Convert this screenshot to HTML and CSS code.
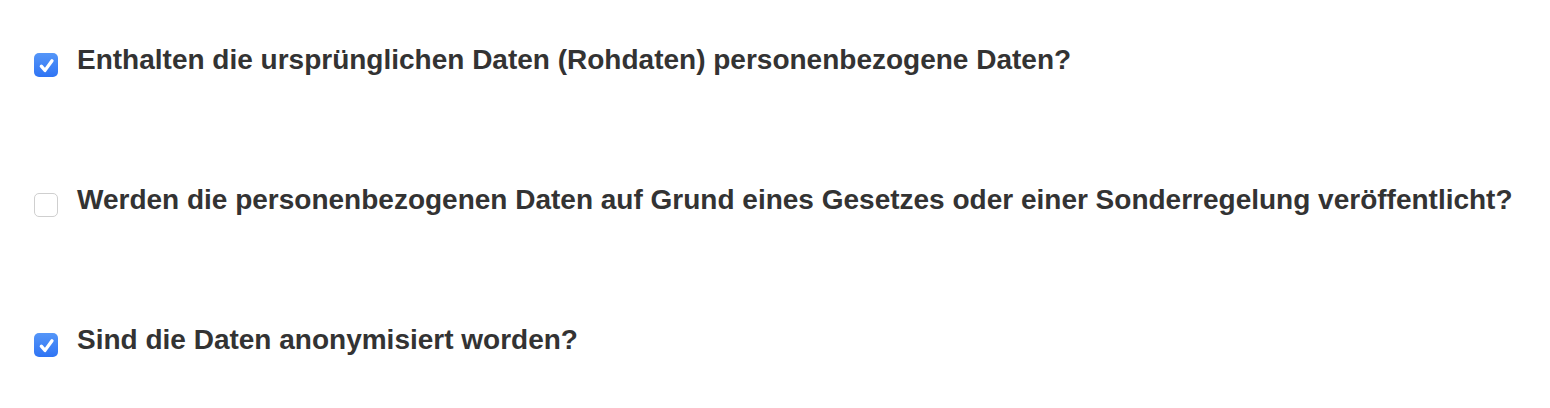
FILE: index.html
```html
<!DOCTYPE html>
<html lang="de">
<head>
<meta charset="utf-8">
<link rel="stylesheet" href="styles.css">
</head>
<body>
<div class="list">
  <label class="item"><span class="box checked"><svg viewBox="0 0 24 24" width="24" height="24"><path d="M7.3 13.2 L11 17.4 L18 7.8" fill="none" stroke="#fff" stroke-width="3.3" stroke-linecap="round" stroke-linejoin="round"/></svg></span><span class="text">Enthalten die ursprünglichen Daten (Rohdaten) personenbezogene Daten?</span></label>
  <label class="item"><span class="box"></span><span class="text">Werden die personenbezogenen Daten auf Grund eines Gesetzes oder einer Sonderregelung veröffentlicht?</span></label>
  <label class="item"><span class="box checked"><svg viewBox="0 0 24 24" width="24" height="24"><path d="M7.3 13.2 L11 17.4 L18 7.8" fill="none" stroke="#fff" stroke-width="3.3" stroke-linecap="round" stroke-linejoin="round"/></svg></span><span class="text">Sind die Daten anonymisiert worden?</span></label>
</div>
</body>
</html>
```
FILE: styles.css
```css
html, body {
  margin: 0;
  background: #fff;
}
body {
  font-family: "Liberation Sans", Arial, sans-serif;
  color: #333;
}
.list {
  display: flex;
  flex-direction: column;
  gap: 100px;
  padding: 40px 0 0 34px;
}
.item {
  display: flex;
  align-items: center;
  gap: 19px;
  height: 40px;
}
.box {
  flex: none;
  width: 24px;
  height: 24px;
  box-sizing: border-box;
  border-radius: 5px;
  border: 1px solid #cfcfcf;
  background: #fff;
  margin-top: 10px;
  display: flex;
}
.box.checked {
  border: none;
  background: linear-gradient(#5596f8, #2f74f4);
}
.text {
  font-size: 28px;
  font-weight: bold;
  line-height: 40px;
}
```
